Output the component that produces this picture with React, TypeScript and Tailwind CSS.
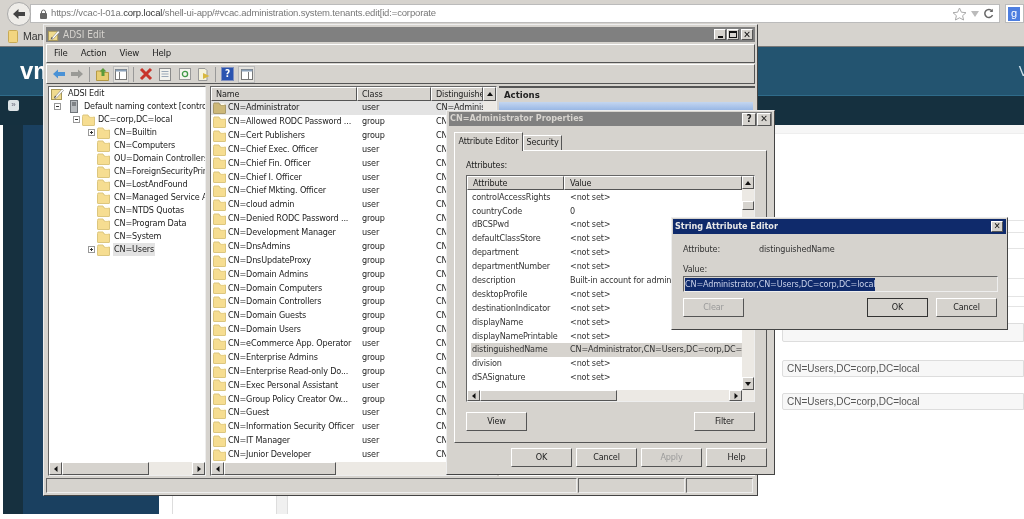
import type { ReactNode } from 'react';

const NAME_ROWS = [
  ['CN=Administrator', 'user'],
  ['CN=Allowed RODC Password ...', 'group'],
  ['CN=Cert Publishers', 'group'],
  ['CN=Chief Exec. Officer', 'user'],
  ['CN=Chief Fin. Officer', 'user'],
  ['CN=Chief I. Officer', 'user'],
  ['CN=Chief Mkting. Officer', 'user'],
  ['CN=cloud admin', 'user'],
  ['CN=Denied RODC Password ...', 'group'],
  ['CN=Development Manager', 'user'],
  ['CN=DnsAdmins', 'group'],
  ['CN=DnsUpdateProxy', 'group'],
  ['CN=Domain Admins', 'group'],
  ['CN=Domain Computers', 'group'],
  ['CN=Domain Controllers', 'group'],
  ['CN=Domain Guests', 'group'],
  ['CN=Domain Users', 'group'],
  ['CN=eCommerce App. Operator', 'user'],
  ['CN=Enterprise Admins', 'group'],
  ['CN=Enterprise Read-only Do...', 'group'],
  ['CN=Exec Personal Assistant', 'user'],
  ['CN=Group Policy Creator Ow...', 'group'],
  ['CN=Guest', 'user'],
  ['CN=Information Security Officer', 'user'],
  ['CN=IT Manager', 'user'],
  ['CN=Junior Developer', 'user'],
];

const TREE_CHILDREN = [
  ['CN=Builtin', true],
  ['CN=Computers', false],
  ['OU=Domain Controllers', false],
  ['CN=ForeignSecurityPrincipals', false],
  ['CN=LostAndFound', false],
  ['CN=Managed Service Accounts', false],
  ['CN=NTDS Quotas', false],
  ['CN=Program Data', false],
  ['CN=System', false],
  ['CN=Users', true],
] as const;

const ATTRIBUTES = [
  ['controlAccessRights', '<not set>'],
  ['countryCode', '0'],
  ['dBCSPwd', '<not set>'],
  ['defaultClassStore', '<not set>'],
  ['department', '<not set>'],
  ['departmentNumber', '<not set>'],
  ['description', 'Built-in account for administering'],
  ['desktopProfile', '<not set>'],
  ['destinationIndicator', '<not set>'],
  ['displayName', '<not set>'],
  ['displayNamePrintable', '<not set>'],
  ['distinguishedName', 'CN=Administrator,CN=Users,DC=corp,DC=local'],
  ['division', '<not set>'],
  ['dSASignature', '<not set>'],
];

const raised = 'border border-t-white border-l-white border-r-[#555] border-b-[#555]';
const sunken = 'border border-t-[#666] border-l-[#666] border-r-[#eee] border-b-[#eee]';
const ui = "font-['DejaVu_Sans',sans-serif] [font-stretch:condensed] tracking-[-0.15px]";

function Folder({ dim }: { dim?: boolean }) {
  return (
    <svg width="13" height="12" viewBox="0 0 13 12" className="shrink-0">
      <path d="M0.5 2.5 L0.5 11 Q0.5 11.5 1 11.5 L12 11.5 Q12.5 11.5 12.5 11 L12.5 3 L7 3 L6 1 L1 1 Z" fill={dim ? '#cdb878' : '#f6dd91'} stroke={dim ? '#a8996a' : '#dcc67e'} />
      <path d="M8 1.5 L11.5 1.5 L11.5 3 L8 3 Z" fill="#fffbe8" />
    </svg>
  );
}

function AdsiIcon({ size }: { size: number }) {
  return (
    <svg width={size} height={size} viewBox="0 0 13 13" className="shrink-0">
      <rect x="0.5" y="2.5" width="10" height="10" fill="#f0db8e" stroke="#a89858" />
      <path d="M3 11 L11 2 L12.5 3.5 L5 11.5 Z" fill="#fff" stroke="#777" strokeWidth="0.6" />
      <path d="M3 11 L4 8.5 L5.5 10 Z" fill="#555" />
    </svg>
  );
}

function Expander({ open }: { open: boolean }) {
  return (
    <svg width="7" height="7" viewBox="0 0 7 7" className="shrink-0">
      <rect x="0.5" y="0.5" width="6" height="6" fill="#fff" stroke="#999" />
      <path d={open ? 'M2 3.5 H5' : 'M2 3.5 H5 M3.5 2 V5'} stroke="#333" />
    </svg>
  );
}

function Arrow({ dir }: { dir: 'up' | 'down' | 'left' | 'right' }) {
  const points = {
    up: '4,2 1,6 7,6',
    down: '1,2 7,2 4,6',
    left: '5.5,1 5.5,7 2,4',
    right: '2.5,1 2.5,7 6,4',
  }[dir];
  return (
    <svg width="8" height="8" viewBox="0 0 8 8">
      <polygon points={points} fill="#111" />
    </svg>
  );
}

function ScrollBtn({ dir, className }: { dir: 'up' | 'down' | 'left' | 'right'; className: string }) {
  return (
    <div className={`flex items-center justify-center bg-[#d6d3ce] shrink-0 ${raised} ${className}`}>
      <Arrow dir={dir} />
    </div>
  );
}

function Btn({ children, className = '', disabled }: { children: ReactNode; className?: string; disabled?: boolean }) {
  return (
    <div className={`h-[19px] flex items-center justify-center bg-[#d6d3ce] ${raised} text-[9px] ${disabled ? 'text-[#9a9a9a]' : 'text-[#222]'} ${className}`}>
      {children}
    </div>
  );
}

function TitleClose({ label }: { label: string }) {
  return (
    <div className={`w-[14px] h-[13px] flex items-center justify-center bg-[#d6d3ce] ${raised} text-[10px] font-bold text-[#222] leading-none`}>
      {label}
    </div>
  );
}

function ToolbarIcons() {
  return (
    <div className="flex items-center h-full pl-[5px]">
      {/* back / forward */}
      <svg width="14" height="12" viewBox="0 0 14 12"><path d="M1 6 L6 1.5 V4 H13 V8 H6 V10.5 Z" fill="#4a92d6" /></svg>
      <svg width="14" height="12" viewBox="0 0 14 12" className="ml-[4px]"><path d="M13 6 L8 1.5 V4 H1 V8 H8 V10.5 Z" fill="#9a9a96" /></svg>
      <div className="w-px h-[15px] bg-[#999] ml-[5px]" />
      {/* up folder */}
      <svg width="13" height="14" viewBox="0 0 13 14" className="ml-[6px]">
        <path d="M0.5 4 H5 L6 5.5 H12.5 V13.5 H0.5 Z" fill="#e8cd72" stroke="#b59a45" />
        <path d="M7 1 L10.5 4.5 H8.5 V9 H5.5 V4.5 H3.5 Z" fill="#5a9a3a" />
      </svg>
      {/* tree view, pressed */}
      <div className="ml-[4px] w-[16px] h-[17px] bg-[#e4e2dd] border border-[#bbb] flex items-center justify-center">
        <svg width="12" height="11" viewBox="0 0 12 11">
          <rect x="0.5" y="0.5" width="11" height="10" fill="#fff" stroke="#777" />
          <rect x="0.5" y="0.5" width="11" height="2" fill="#8aa0b8" />
          <path d="M4.5 3 V10" stroke="#777" />
        </svg>
      </div>
      <div className="w-px h-[15px] bg-[#999] ml-[4px]" />
      {/* delete */}
      <svg width="14" height="14" viewBox="0 0 14 14" className="ml-[5px]">
        <path d="M2 2 L12 12 M12 2 L2 12" stroke="#c8342a" strokeWidth="3" />
      </svg>
      {/* properties */}
      <svg width="12" height="13" viewBox="0 0 12 13" className="ml-[6px]">
        <rect x="0.5" y="0.5" width="11" height="12" fill="#f2f2ee" stroke="#8a8a8a" />
        <path d="M2.5 3.5 H9.5 M2.5 6 H9.5 M2.5 8.5 H9.5" stroke="#9aa8b8" />
      </svg>
      {/* refresh */}
      <svg width="12" height="12" viewBox="0 0 12 12" className="ml-[8px]">
        <rect x="0.5" y="0.5" width="11" height="11" fill="#f6f6f0" stroke="#999" />
        <circle cx="6" cy="6" r="2.6" fill="none" stroke="#3f9a45" strokeWidth="1.3" />
      </svg>
      {/* export */}
      <svg width="13" height="13" viewBox="0 0 13 13" className="ml-[6px]">
        <path d="M1.5 0.5 H8 L10 2.5 V12.5 H1.5 Z" fill="#f5f2dc" stroke="#999" />
        <path d="M6 5 L12.5 8 L6 11 Z" fill="#d8b83e" />
      </svg>
      <div className="w-px h-[15px] bg-[#999] ml-[5px]" />
      {/* help */}
      <div className="ml-[5px] w-[13px] h-[14px] bg-[#2b54b0] border border-[#8090c0] flex items-center justify-center text-[10px] font-bold leading-none text-white">?</div>
      {/* view, pressed */}
      <div className="ml-[4px] w-[17px] h-[17px] bg-[#e4e2dd] border border-[#bbb] flex items-center justify-center">
        <svg width="12" height="11" viewBox="0 0 12 11">
          <rect x="0.5" y="0.5" width="11" height="10" fill="#fff" stroke="#777" />
          <rect x="0.5" y="0.5" width="11" height="2" fill="#8aa0b8" />
          <path d="M7.5 3 V10" stroke="#777" />
        </svg>
      </div>
    </div>
  );
}

function TreePane() {
  return (
    <div className={`w-[158px] flex flex-col bg-white ${sunken} overflow-hidden`}>
      <div className="flex-1 text-[9px] text-[#222] whitespace-nowrap leading-[13px]">
        <div className="h-[13px] flex items-center pl-[2px]">
          <AdsiIcon size={13} />
          <span className="ml-[4px]">ADSI Edit</span>
        </div>
        <div className="h-[13px] flex items-center pl-[5px]">
          <Expander open />
          <svg width="8" height="13" viewBox="0 0 8 13" className="ml-[9px] shrink-0">
            <rect x="0.5" y="0.5" width="7" height="12" fill="#b8bcc0" stroke="#70757a" />
            <path d="M2 3 H6 M2 5 H6" stroke="#44484c" />
          </svg>
          <span className="ml-[6px]">Default naming context [controller.corp.local]</span>
        </div>
        <div className="h-[13px] flex items-center pl-[24px]">
          <Expander open />
          <div className="ml-[2px]"><Folder /></div>
          <span className="ml-[3px]">DC=corp,DC=local</span>
        </div>
        {TREE_CHILDREN.map(([label, expand]) => (
          <div key={label} className="h-[13px] flex items-center pl-[39px]">
            <div className="w-[7px] shrink-0">{expand && <Expander open={false} />}</div>
            <div className="ml-[2px]"><Folder /></div>
            <span className={`ml-[3px] px-[1px] ${label === 'CN=Users' ? 'bg-[#e3e3e3]' : ''}`}>{label}</span>
          </div>
        ))}
      </div>
      <div className="h-[13px] flex bg-[#ece9e4] shrink-0">
        <ScrollBtn dir="left" className="w-[13px]" />
        <div className={`w-[87px] bg-[#d6d3ce] ${raised}`} />
        <div className="flex-1" />
        <ScrollBtn dir="right" className="w-[13px]" />
      </div>
    </div>
  );
}

function ListPane() {
  return (
    <div className={`w-[287px] ml-[4px] flex flex-col bg-white ${sunken} overflow-hidden`}>
      <div className="h-[14px] flex text-[9px] text-[#222] leading-[13px] shrink-0">
        <div className={`w-[146px] pl-[4px] bg-[#d6d3ce] ${raised}`}>Name</div>
        <div className={`w-[74px] pl-[4px] bg-[#d6d3ce] ${raised}`}>Class</div>
        <div className={`flex-1 pl-[4px] bg-[#d6d3ce] overflow-hidden whitespace-nowrap ${raised}`}>Distinguished Name</div>
        <ScrollBtn dir="up" className="w-[13px]" />
      </div>
      <div className="flex-1 flex min-h-0">
        <div className="flex-1 text-[9px] text-[#222] min-w-0">
          {NAME_ROWS.map(([name, cls], i) => (
            <div key={name} className={`h-[13.88px] flex items-center pl-[2px] whitespace-nowrap overflow-hidden ${i === 0 ? 'bg-[#e3e3e3]' : ''}`}>
              <Folder dim={i === 0} />
              <span className="ml-[2px] w-[134px] shrink-0">{name}</span>
              <span className="w-[74px] shrink-0">{cls}</span>
              <span>CN=Administrator</span>
            </div>
          ))}
        </div>
        <div className="w-[13px] bg-[#ece9e4] shrink-0" />
      </div>
      <div className="h-[13px] flex bg-[#ece9e4] shrink-0">
        <ScrollBtn dir="left" className="w-[13px]" />
        <div className={`w-[112px] bg-[#d6d3ce] ${raised}`} />
      </div>
    </div>
  );
}

function AdsiWindow() {
  return (
    <div className={`absolute left-[43px] top-[24px] w-[715px] h-[472px] bg-[#d6d3ce] p-[2px] flex flex-col border border-t-[#eee] border-l-[#eee] border-r-[#444] border-b-[#444] ${ui}`}>
      <div className="h-[15px] bg-[#808080] flex items-center justify-between pl-[2px] pr-[2px] shrink-0">
        <div className="flex items-center text-[10px] tracking-normal text-[#d6d3ce]">
          <AdsiIcon size={12} />
          <span className="ml-[3px]">ADSI Edit</span>
        </div>
        <div className="flex gap-[1px]">
          <div className={`w-[12px] h-[11px] bg-[#d6d3ce] ${raised} flex items-end justify-center pb-[1px]`}><div className="w-[5px] h-[2px] bg-[#111]" /></div>
          <div className={`w-[12px] h-[11px] bg-[#d6d3ce] ${raised} flex items-center justify-center`}><div className="w-[8px] h-[7px] border border-t-2 border-[#111]" /></div>
          <div className={`w-[12px] h-[11px] bg-[#d6d3ce] ${raised} flex items-center justify-center text-[10px] font-bold leading-none text-[#111] ml-[1px]`}>✕</div>
        </div>
      </div>
      <div className={`h-[19px] mt-[2px] shrink-0 flex items-center text-[9.5px] text-[#222] pl-[7px] gap-[13px] ${raised}`}>
        <span>File</span>
        <span>Action</span>
        <span>View</span>
        <span>Help</span>
      </div>
      <div className={`h-[20px] mt-[1px] shrink-0 ${raised}`}>
        <ToolbarIcons />
      </div>
      <div className="flex-1 flex mt-[2px] pl-[2px] min-h-0">
        <TreePane />
        <ListPane />
        <div className="flex-1 ml-[2px] flex flex-col border-t-2 border-[#555] min-w-0">
          <div className="h-[14px] pl-[5px] bg-[#d6d3ce] text-[9.5px] font-bold tracking-normal text-[#222] leading-[13px] shrink-0">Actions</div>
          <div className="h-[10px] bg-gradient-to-b from-[#c4d6f0] to-[#8fb0e2] mr-[2px]" />
          <div className="flex-1 bg-white" />
        </div>
      </div>
      <div className="h-[15px] mt-[2px] flex shrink-0">
        <div className={`w-[531px] ${sunken}`} />
        <div className={`w-[107px] ml-[1px] ${sunken}`} />
        <div className={`flex-1 ml-[1px] mr-[2px] ${sunken}`} />
      </div>
    </div>
  );
}

function PropertiesDialog() {
  return (
    <div className={`absolute left-[446px] top-[110px] w-[329px] h-[365px] bg-[#d6d3ce] pt-[1px] pb-[2px] px-[2px] flex flex-col border border-t-[#eee] border-l-[#eee] border-r-[#444] border-b-[#444] ${ui}`}>
      <div className="h-[14px] bg-[#808080] flex items-center justify-between pl-[1px] pr-[1px] shrink-0">
        <span className="text-[9px] font-bold tracking-normal text-[#d6d3ce]">CN=Administrator Properties</span>
        <div className="flex gap-[1px]">
          <TitleClose label="?" />
          <TitleClose label="✕" />
        </div>
      </div>
      <div className="flex items-end h-[24px] pl-[5px] shrink-0 text-[9px] text-[#222]">
        <div className="w-[69px] h-[19px] flex items-center justify-center border border-b-0 border-t-white border-l-white border-r-[#555] relative top-[1px] bg-[#d6d3ce] z-10">Attribute Editor</div>
        <div className="w-[39px] h-[15px] flex items-center justify-center border border-b-0 border-t-white border-l-white border-r-[#555]">Security</div>
      </div>
      <div className={`mx-[5px] h-[293px] flex flex-col pl-[11px] pr-[11px] ${raised} shrink-0`}>
        <div className="h-[24px] flex items-end pb-[5px] shrink-0 text-[9px] text-[#222] leading-none">Attributes:</div>
        <div className={`h-[227px] flex flex-col bg-white ${sunken} shrink-0 overflow-hidden`}>
          <div className="flex flex-1 min-h-0">
            <div className="w-[275px] flex flex-col shrink-0 min-h-0">
              <div className="h-[14px] flex text-[9px] text-[#222] leading-[13px] shrink-0">
                <div className={`w-[97px] pl-[5px] bg-[#d6d3ce] ${raised}`}>Attribute</div>
                <div className={`flex-1 pl-[5px] bg-[#d6d3ce] ${raised}`}>Value</div>
              </div>
              <div className="flex-1 overflow-hidden text-[9px] text-[#333] pt-[0.5px]">
                {ATTRIBUTES.map(([attr, value]) => (
                  <div key={attr} className={`h-[13.9px] flex items-center whitespace-nowrap overflow-hidden ml-[4px] pl-[1px] ${attr === 'distinguishedName' ? 'bg-[#d6d3ce]' : ''}`}>
                    <span className="w-[98px] shrink-0">{attr}</span>
                    <span>{value}</span>
                  </div>
                ))}
              </div>
            </div>
            <div className="flex-1 flex flex-col bg-[#ece9e4]">
              <ScrollBtn dir="up" className="h-[13px]" />
              <div className="h-[12px]" />
              <div className={`h-[9px] bg-[#d6d3ce] ${raised}`} />
              <div className="flex-1" />
              <ScrollBtn dir="down" className="h-[13px]" />
            </div>
          </div>
          <div className="h-[11px] flex bg-[#ece9e4] shrink-0">
            <ScrollBtn dir="left" className="w-[13px]" />
            <div className={`w-[137px] bg-[#d6d3ce] ${raised}`} />
            <div className="w-[112px]" />
            <ScrollBtn dir="right" className="w-[13px]" />
          </div>
        </div>
        <div className="flex justify-between mt-[10px] shrink-0">
          <Btn className="w-[61px]">View</Btn>
          <Btn className="w-[61px]">Filter</Btn>
        </div>
      </div>
      <div className="flex justify-end gap-[4px] mt-[5px] pr-[5px] shrink-0">
        <Btn className="w-[61px]">OK</Btn>
        <Btn className="w-[61px]">Cancel</Btn>
        <Btn className="w-[61px]" disabled>Apply</Btn>
        <Btn className="w-[61px]">Help</Btn>
      </div>
    </div>
  );
}

function StringEditor() {
  return (
    <div className={`absolute left-[671px] top-[217px] w-[337px] h-[113px] bg-[#d6d3ce] p-[1px] flex flex-col border border-t-[#eee] border-l-[#eee] border-r-[#444] border-b-[#444] ${ui}`}>
      <div className="h-[15px] bg-[#0f2a6b] flex items-center justify-between pl-[2px] pr-[3px] shrink-0">
        <span className="text-[9px] font-bold tracking-normal text-[#e8e8e8]">String Attribute Editor</span>
        <div className={`w-[12px] h-[11px] bg-[#d6d3ce] ${raised} flex items-center justify-center text-[9px] font-bold leading-none text-[#111]`}>✕</div>
      </div>
      <div className="flex flex-col px-[10px] text-[9px] text-[#333]">
        <div className="flex h-[14px] mt-[9px] items-center">
          <span className="w-[76px]">Attribute:</span>
          <span>distinguishedName</span>
        </div>
        <div className="h-[14px] mt-[6px] flex items-center">Value:</div>
        <div className={`h-[16px] -mt-[1px] ${sunken} flex items-center pl-[1px] w-[315px] shrink-0`}>
          <span className="bg-[#0f2a6b] text-[#c8d0e8] leading-[13px]">CN=Administrator,CN=Users,DC=corp,DC=local</span>
        </div>
        <div className="flex mt-[6px] justify-between w-[314px]">
          <Btn className="w-[61px]" disabled>Clear</Btn>
          <div className="flex gap-[8px]">
            <Btn className="w-[61px] !border-[#333]">OK</Btn>
            <Btn className="w-[61px]">Cancel</Btn>
          </div>
        </div>
      </div>
    </div>
  );
}

function Background() {
  return (
    <div className="h-[519px] flex flex-col bg-white overflow-hidden">
      <div className="h-[27px] bg-[#d6d3ce] flex items-center pl-[7px] shrink-0">
        <div className="w-[24px] h-[24px] rounded-full bg-[#eeece8] border border-[#aaa] flex items-center justify-center shrink-0 z-10">
          <svg width="14" height="12" viewBox="0 0 14 12"><path d="M1 6 L6.5 1 V4 H13 V8 H6.5 V11 Z" fill="#444" /></svg>
        </div>
        <div className="w-[970px] h-[19px] -ml-[1px] bg-white border border-[#bbb] flex items-center pl-[8px] text-[9.5px] tracking-[-0.15px] text-[#777] whitespace-nowrap shrink-0">
          <svg width="9" height="10" viewBox="0 0 9 10" className="shrink-0">
            <rect x="1" y="4" width="7" height="6" rx="1" fill="#666" />
            <path d="M2.5 4 V3 A2 2 0 0 1 6.5 3 V4" fill="none" stroke="#666" />
          </svg>
          <span className="ml-[3px]">https://vcac-l-01a.</span>
          <span className="text-[#333]">corp.local</span>
          <span>/shell-ui-app/#vcac.administration.system.tenants.edit[id:=corporate</span>
          <div className="ml-auto flex items-center gap-[4px] pr-[5px]">
            <svg width="15" height="14" viewBox="0 0 15 14"><path d="M7.5 1 L9.4 5.2 L14 5.7 L10.6 8.7 L11.6 13 L7.5 10.8 L3.4 13 L4.4 8.7 L1 5.7 L5.6 5.2 Z" fill="none" stroke="#aaa" /></svg>
            <svg width="8" height="6" viewBox="0 0 8 6"><path d="M0 0 H8 L4 6 Z" fill="#bbb" /></svg>
            <svg width="11" height="11" viewBox="0 0 11 11"><path d="M9 3 A4 4 0 1 0 9.5 7" fill="none" stroke="#666" strokeWidth="1.5" /><path d="M9.8 0.8 V4 H6.6 Z" fill="#666" /></svg>
          </div>
        </div>
        <div className="ml-[5px] flex-1 h-[19px] bg-white border border-[#bbb] pl-[2px] flex items-center">
          <div className="w-[12px] h-[14px] bg-[#4d7ee0] text-white text-[11px] leading-none flex items-center justify-center">g</div>
        </div>
      </div>
      <div className="h-[20px] bg-[#d6d3ce] border-b border-[#777] flex items-center pl-[8px] text-[10.5px] text-[#333] shrink-0">
        <svg width="10" height="13" viewBox="0 0 10 13"><rect x="0.5" y="0.5" width="9" height="12" rx="1" fill="#f2d580" stroke="#c8aa55" /></svg>
        <span className="ml-[5px]">Mana</span>
      </div>
      <div className="h-[49px] bg-[#235470] border-b border-[#2f6b8a] flex justify-between items-center pl-[20px] shrink-0">
        <span className="text-[24px] font-bold text-white leading-none">vm</span>
        <span className="text-[14px] text-[#cfe0ea] -mr-[4px]">V</span>
      </div>
      <div className="h-[29px] bg-[#15303f] pl-[8px] pt-[4px] shrink-0">
        <div className="w-[11px] h-[11px] rounded-[2px] bg-[#dde3e6] text-[#667] text-[8px] leading-[10px] text-center">»</div>
      </div>
      <div className="flex-1 flex min-h-0 pb-[5px]">
        <div className="w-[3px] bg-white" />
        <div className="w-[20px] bg-[#16303f]" />
        <div className="w-[136px] bg-[#1a4060]" />
        <div className="flex-1 flex flex-col pl-[13px] relative text-[10px] text-[#555]">
          <div className="border-b border-[#eee] h-[9px] -ml-[13px] bg-[#f6f6f6] shrink-0" />
          <div className="flex-1 flex min-h-0">
            <div className="w-[104px] border-l border-[#ddd] shrink-0" />
            <div className="w-[12px] bg-[#f0f0f0] border-x border-[#ddd] shrink-0" />
            <div className="flex-1 pl-[494px] pt-[86px] flex flex-col min-w-0">
              <div className="h-[13px] border-y border-[#e4e4e4] shrink-0 mb-[15px]" />
              <div className="h-[31px] border-y border-[#e4e4e4] shrink-0 mb-[17px]" />
              <div className="h-[11px] border-y border-[#e4e4e4] shrink-0 mb-[16px]" />
              <div className="h-[19px] rounded-l-[2px] border border-[#ddd] bg-[#f7f7f7] shrink-0 mb-[18px]" />
              <div className="h-[17px] rounded-l-[2px] border border-[#ddd] bg-[#f7f7f7] flex items-center pl-[4px] shrink-0 mb-[16px] whitespace-nowrap">CN=Users,DC=corp,DC=local</div>
              <div className="h-[17px] rounded-l-[2px] border border-[#ddd] bg-[#f7f7f7] flex items-center pl-[4px] shrink-0 whitespace-nowrap">CN=Users,DC=corp,DC=local</div>
            </div>
          </div>
        </div>
      </div>
    </div>
  );
}

export default function App() {
  return (
    <div className="relative w-[1024px] h-[519px] overflow-hidden font-['Liberation_Sans',Arial,sans-serif] blur-[0.3px]">
      <Background />
      <AdsiWindow />
      <PropertiesDialog />
      <StringEditor />
    </div>
  );
}
